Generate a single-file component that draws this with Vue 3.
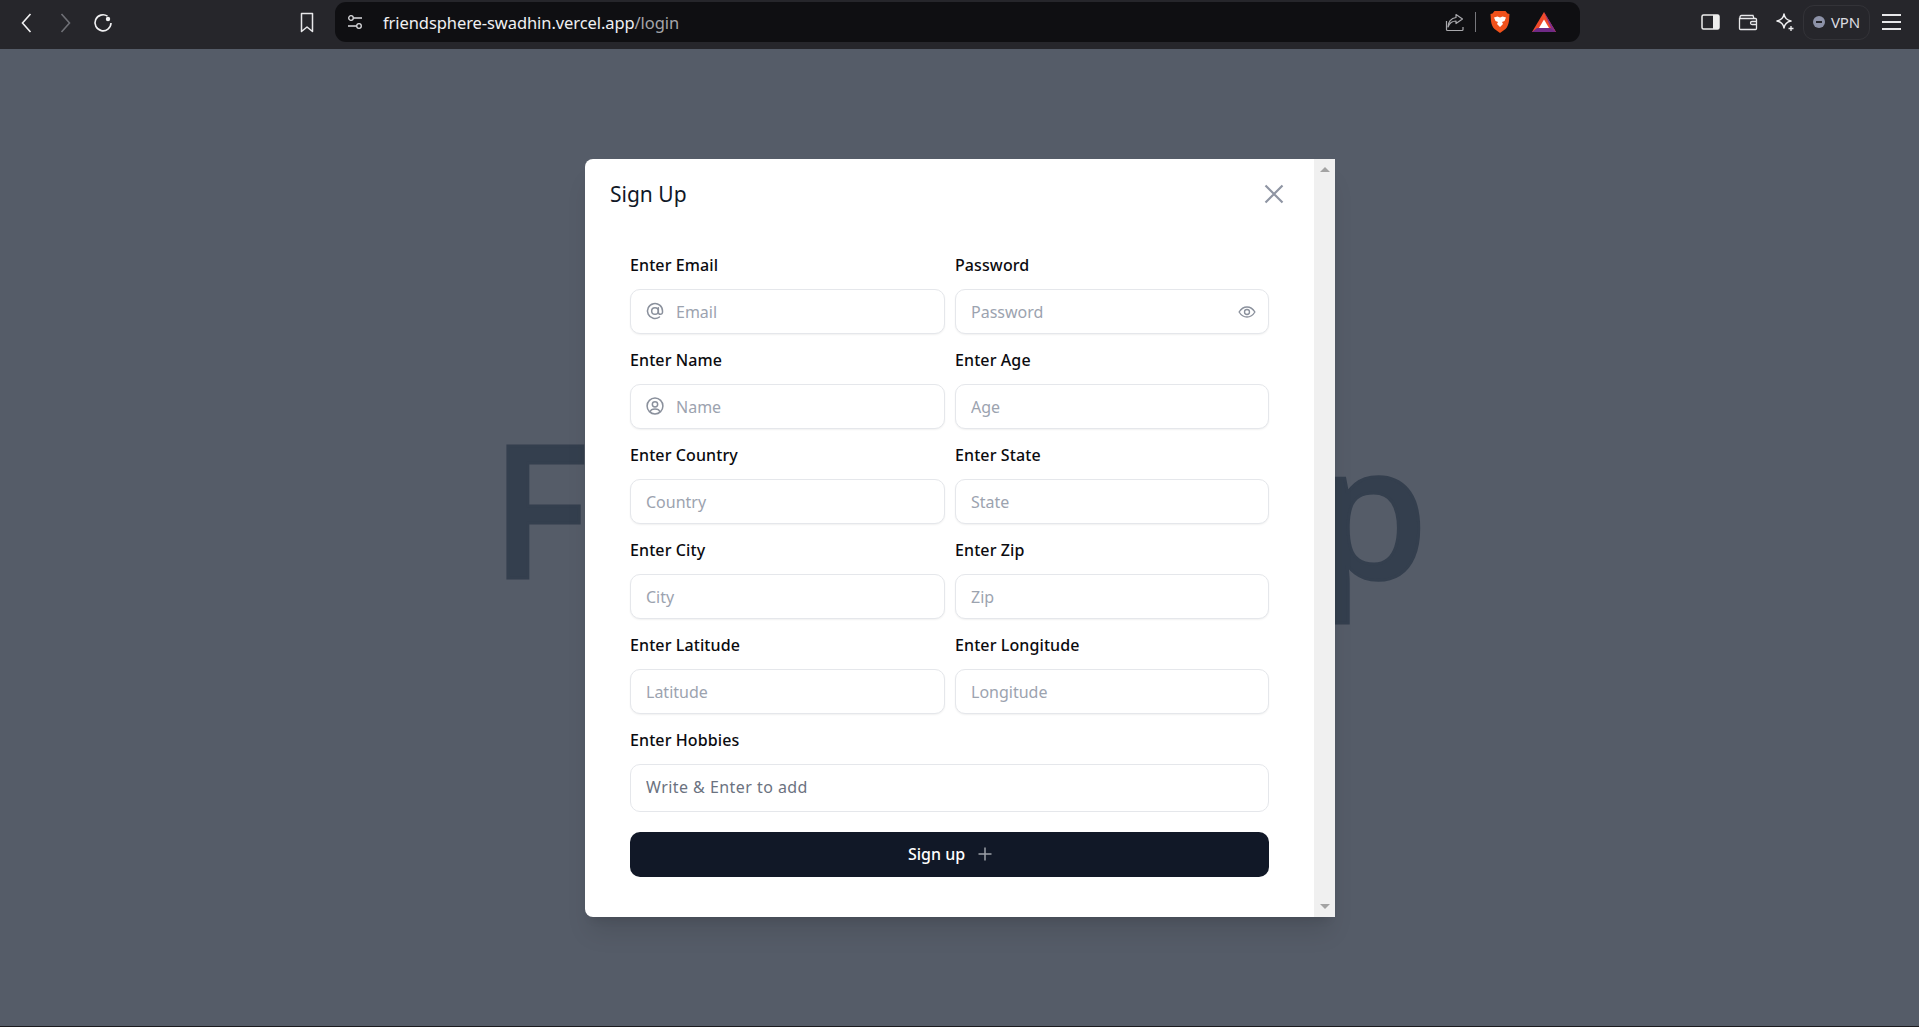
<template>
  <div class="screen">
    <header class="toolbar">
      <div class="nav">
        <button class="tool nav-btn">
          <svg width="24" height="24" viewBox="0 0 24 24" fill="none" stroke="#f1f1f3" stroke-width="1.6"><path d="M15.5 4 7.5 13l8 9" /></svg>
        </button>
        <button class="tool nav-btn">
          <svg width="24" height="24" viewBox="0 0 24 24" fill="none" stroke="#6f7076" stroke-width="1.6"><path d="m8.5 4 8 9-8 9" /></svg>
        </button>
        <button class="tool nav-btn">
          <svg width="24" height="24" viewBox="0 0 24 24" fill="none" stroke="#f1f1f3" stroke-width="1.6"><path d="M16.5 6.200A8 8 0 1 0 20 13" /><circle cx="17" cy="9" r="2.200" fill="#f1f1f3" stroke="none" /></svg>
        </button>
        <button class="tool bookmark">
          <svg width="24" height="24" viewBox="0 0 24 24" fill="none" stroke="#e8e8ea" stroke-width="1.5"><path d="M6.500 3.500h11v18L12 17l-5.500 4.500z" stroke-linejoin="round" /></svg>
        </button>
      </div>
      <div class="urlbar">
        <svg class="tune" width="18" height="18" viewBox="0 0 18 18" fill="none" stroke="#dcdcdf" stroke-width="1.3"><circle cx="5" cy="5" r="2.300" /><path d="M7.500 5H16M2 13h8.500" /><circle cx="13" cy="13" r="2.300" /></svg>
        <span class="url"><span class="host">friendsphere-swadhin.vercel.app</span><span class="path">/login</span></span>
        <div class="url-actions">
          <svg width="22" height="22" viewBox="0 0 22 22" fill="none" stroke="#a9a9ad" stroke-width="1.200"><path d="M12 3.500 18.500 8 12 12.500V10c-4 0-6.500 2-8 6 0-5 3-9 8-9.500zM2.500 10v8.500c0 .8.500 1 1 1H18c.6 0 1-.4 1-1V16" stroke-linejoin="round" /></svg>
          <i class="url-sep"></i>
          <svg class="lion" width="22" height="24" viewBox="0 0 22 24"><path d="M5.500 1h11l2 2.500 2 .5-.5 7c-.6 3.500-1.500 6-3.500 8L11 23l-5.500-4c-2-2-3-4.500-3.500-8L1.500 4l2-.5z" fill="#f1511b" /><path d="M5 7.500 8.500 6.500 11 7.500l2.500-1 3.500 1-1.500 3.500-2.500 1 1 2-3 3-3-3 1-2-2.500-1z" fill="#fff" /></svg>
          <svg class="bat" width="24" height="20" viewBox="0 0 24 20"><path d="M12 0 24 20H0z" fill="#ef4a2a" /><path d="M12 0 24 20 19 16z" fill="#7c2c8f" /><path d="M0 20 5 16h14l5 4z" fill="#6f2a86" /><path d="M12 7.500 17 16H7z" fill="#fff" /></svg>
        </div>
      </div>
      <div class="browser-tools">
        <svg class="rt sidebar" width="20" height="18" viewBox="0 0 20 18"><rect x="1" y="2" width="17" height="14" rx="1.500" fill="none" stroke="#eee" stroke-width="1.500" /><rect x="12" y="2" width="6" height="14" fill="#eee" /></svg>
        <svg class="rt wallet" width="20" height="18" viewBox="0 0 20 18" fill="none" stroke="#e8e8ea" stroke-width="1.300"><path d="M2 5.500V4c0-1 .5-1.500 1.500-1.500H15L16 5.500M1.500 5.500h16c.5 0 1 .5 1 1v9c0 .5-.5 1-1 1h-15c-.5 0-1-.5-1-1z" /><path d="M18.500 8.500H14c-1 0-1.500.6-1.500 1.500s.5 1.500 1.500 1.500h4.500" /></svg>
        <svg class="rt sparkle" width="20" height="20" viewBox="0 0 20 20" fill="none" stroke="#f0f0f2" stroke-width="1.500"><path d="M9 2c.6 4 2.500 6 7 7-4.500 1-6.400 3-7 7-.6-4-2.500-6-7-7 4.500-1 6.400-3 7-7z" stroke-linejoin="round" /><path d="M16 14v5M13.500 16.500h5" stroke-width="1.300" /></svg>
        <div class="vpn"><i class="vpn-dot"></i>VPN</div>
        <div class="burger"><i></i><i></i><i></i></div>
      </div>
    </header>

    <main class="page">
      <h1 class="hero">Friendship</h1>

      <section class="modal">
        <div class="modal-body">
          <div class="modal-head">
            <h2>Sign Up</h2>
            <svg width="24" height="24" viewBox="0 0 24 24" fill="none" stroke="#8f95a3" stroke-width="2.200"><path d="M3.500 3.500 20.500 20.500M20.500 3.500 3.500 20.500" /></svg>
          </div>

          <form class="grid" @submit.prevent>
            <div v-for="f in fields" :key="f.label" class="field">
              <label>{{ f.label }}</label>
              <div class="input-wrap">
                <svg v-if="f.icon === 'at'" class="left-icon" width="20" height="20" viewBox="0 0 24 24" fill="none" stroke="#8a909c" stroke-width="1.800" stroke-linecap="round"><circle cx="12" cy="12" r="4" /><path d="M16 8v5.500a2.500 2.500 0 0 0 5 0V12a9 9 0 1 0-3.600 7.200" /></svg>
                <svg v-if="f.icon === 'user'" class="left-icon" width="20" height="20" viewBox="0 0 24 24" fill="none" stroke="#8a909c" stroke-width="1.800"><circle cx="12" cy="12" r="9.500" /><circle cx="12" cy="10" r="3.200" /><path d="M6.200 19c.6-2.500 2.500-3.500 5.800-3.500s5.200 1 5.800 3.500" /></svg>
                <input :class="{ 'with-icon': f.icon }" :placeholder="f.placeholder" type="text" />
                <svg v-if="f.eye" class="eye" width="20" height="20" viewBox="0 0 24 24" fill="none" stroke="#8a909c" stroke-width="1.600"><path d="M2.500 12c2.500-4 5.700-6 9.500-6s7 2 9.500 6c-2.500 4-5.700 6-9.500 6s-7-2-9.500-6z" /><circle cx="12" cy="12" r="3" /></svg>
              </div>
            </div>

            <div class="field wide">
              <label>Enter Hobbies</label>
              <div class="input-wrap">
                <input class="hobbies" placeholder="Write &amp; Enter to add" type="text" />
              </div>
            </div>

            <button class="submit wide" type="button">
              Sign up
              <svg width="18" height="18" viewBox="0 0 18 18" fill="none" stroke="#9ca0a8" stroke-width="1.500"><path d="M9 2.500v13M2.500 9h13" /></svg>
            </button>
          </form>
        </div>
        <div class="scrollbar">
          <i class="arrow up"></i>
          <i class="arrow down"></i>
        </div>
      </section>
    </main>
  </div>
</template>

<script setup>
const fields = [
  { label: 'Enter Email', placeholder: 'Email', icon: 'at' },
  { label: 'Password', placeholder: 'Password', eye: true },
  { label: 'Enter Name', placeholder: 'Name', icon: 'user' },
  { label: 'Enter Age', placeholder: 'Age' },
  { label: 'Enter Country', placeholder: 'Country' },
  { label: 'Enter State', placeholder: 'State' },
  { label: 'Enter City', placeholder: 'City' },
  { label: 'Enter Zip', placeholder: 'Zip' },
  { label: 'Enter Latitude', placeholder: 'Latitude' },
  { label: 'Enter Longitude', placeholder: 'Longitude' }
]
</script>

<style>
html,
body {
  margin: 0;
  background: #555c68;
}
</style>

<style scoped>
.screen {
  width: 1919px;
  height: 1027px;
  display: flex;
  flex-direction: column;
  overflow: hidden;
  font-family: 'Noto Sans', sans-serif;
}

.toolbar {
  height: 49px;
  flex: none;
  display: flex;
  align-items: center;
  box-sizing: border-box;
  padding-bottom: 5px;
  background: #26262b;
}

.tool {
  width: 24px;
  height: 24px;
  padding: 0;
  border: 0;
  background: none;
}

.nav {
  width: 335px;
  flex: none;
  display: flex;
  align-items: center;
  padding-left: 15px;
  box-sizing: border-box;
}

.nav-btn {
  margin-right: 14px;
}

.bookmark {
  margin-left: 166px;
}

.urlbar {
  width: 1245px;
  height: 40px;
  flex: none;
  display: flex;
  align-items: center;
  box-sizing: border-box;
  padding: 0 24px 0 11px;
  border-radius: 11px;
  background: #0f0f12;
}

.url {
  margin-left: 19px;
  font-size: 16.500px;
  letter-spacing: -0.080px;
}

.host {
  color: #f0f0f2;
}

.path {
  color: #a5a5aa;
}

.url-actions {
  margin-left: auto;
  display: flex;
  align-items: center;
}

.url-sep {
  width: 1px;
  height: 20px;
  margin: 0 0 0 9px;
  background: #77777c;
}

.lion {
  margin-left: 13px;
}

.bat {
  margin-left: 21px;
}

.browser-tools {
  flex: 1;
  display: flex;
  align-items: center;
}

.sidebar {
  margin-left: 121px;
}

.wallet {
  margin-left: 17px;
}

.sparkle {
  margin-left: 17px;
}

.vpn {
  width: 67px;
  height: 35px;
  margin-left: 8px;
  display: flex;
  align-items: center;
  justify-content: center;
  gap: 6px;
  box-sizing: border-box;
  border: 1px solid #333338;
  border-radius: 11px;
  color: #dcdce0;
  font-size: 15px;
  letter-spacing: -0.2px;
}

.vpn-dot {
  width: 12px;
  height: 12px;
  flex: none;
  border-radius: 50%;
  background: linear-gradient(#26262b, #26262b) center / 6px 2px no-repeat, #8d92a8;
}

.burger {
  margin-left: 12px;
  display: flex;
  flex-direction: column;
  gap: 5px;
}

.burger i {
  display: block;
  width: 19px;
  height: 2px;
  background: #e8e8ea;
}

.page {
  position: relative;
  flex: 1;
  display: flex;
  justify-content: center;
  background: #555c68;
  border-bottom: 1px solid #1c1c20;
}

.hero {
  margin: 345px 0 0;
  color: #343f4e;
  font-size: 186px;
  line-height: 1.2;
  font-weight: 550;
  white-space: nowrap;
  -webkit-text-stroke: 3px #343f4e;
}

.modal {
  position: absolute;
  left: 585px;
  top: 110px;
  width: 750px;
  height: 758px;
  display: flex;
  background: #fff;
  border-radius: 8px 0 0 8px;
  box-shadow: 0 20px 25px -5px rgba(0, 0, 0, 0.1), 0 8px 10px -6px rgba(0, 0, 0, 0.1);
}

.modal-body {
  flex: 1;
  padding: 0 45px;
}

.modal-head {
  height: 93px;
  margin-left: -20px;
  margin-right: -17px;
  display: flex;
  align-items: flex-start;
  justify-content: space-between;
  padding-top: 21px;
  box-sizing: border-box;
}

.modal-head h2 {
  margin: 0;
  color: #111827;
  font-size: 21px;
  line-height: 28px;
  font-weight: 400;
}

.modal-head svg {
  margin: 2px 0 0;
}

.grid {
  display: grid;
  grid-template-columns: 315px 314px;
  column-gap: 10px;
  row-gap: 13px;
}

.wide {
  grid-column: 1 / 3;
}

.field label {
  display: block;
  height: 24px;
  margin-bottom: 13px;
  color: #0b0b0f;
  font-size: 16px;
  line-height: 26px;
  font-weight: 500;
  letter-spacing: 0.100px;
}

.input-wrap {
  position: relative;
}

.input-wrap input {
  display: block;
  width: 100%;
  height: 45px;
  box-sizing: border-box;
  padding: 0 15px;
  border: 1px solid #e5e7eb;
  border-radius: 10px;
  outline: 0;
  background: #fff;
  box-shadow: 0 1px 2px rgba(0, 0, 0, 0.06);
  font-family: inherit;
  font-size: 16px;
}

.input-wrap input::placeholder {
  color: #9ca3af;
}

.input-wrap input.with-icon {
  padding-left: 45px;
}

.input-wrap input.hobbies {
  height: 48px;
  padding-bottom: 2px;
  box-shadow: none;
  letter-spacing: 0.450px;
}

.input-wrap input.hobbies::placeholder {
  color: #6b7280;
}

.left-icon {
  position: absolute;
  left: 15px;
  top: 12px;
}

.eye {
  position: absolute;
  right: 12px;
  top: 13px;
}

.submit {
  height: 45px;
  margin-top: 7px;
  display: flex;
  align-items: center;
  justify-content: center;
  gap: 11px;
  padding: 0 0 2px 3px;
  border: 0;
  border-radius: 10px;
  background: #111827;
  color: #fff;
  font-family: inherit;
  font-size: 16px;
  font-weight: 500;
}

.scrollbar {
  width: 21px;
  flex: none;
  display: flex;
  flex-direction: column;
  justify-content: space-between;
  align-items: center;
  padding: 8px 0;
  box-sizing: border-box;
  background: #f0f0f0;
}

.arrow {
  width: 0;
  height: 0;
  border-left: 5px solid transparent;
  border-right: 5px solid transparent;
}

.arrow.up {
  border-bottom: 5px solid #a3a3a3;
}

.arrow.down {
  border-top: 5px solid #a3a3a3;
}
</style>
